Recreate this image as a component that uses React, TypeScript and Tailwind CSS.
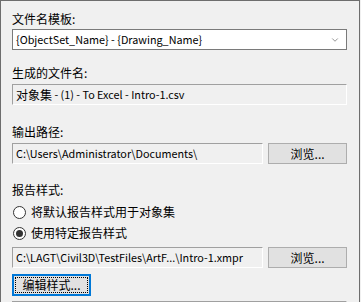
import { ChevronDown } from 'lucide-react';

const font = { fontFamily: '"Noto Sans CJK SC", "Noto Sans", sans-serif' };

function Label({ children, className = '' }: { children: React.ReactNode; className?: string }) {
  return <div className={`h-4 text-[12px] leading-4 text-black ${className}`}>{children}</div>;
}

function Sunken({ children, className = '' }: { children?: React.ReactNode; className?: string }) {
  return (
    <div
      className={`flex h-[21px] items-center overflow-hidden whitespace-nowrap border border-t-[#a0a0a0] border-l-[#a0a0a0] border-b-white border-r-white bg-[#f0f0f0] pl-[3px] text-[10.8px] text-black ${className}`}
    >
      {children}
    </div>
  );
}

function Browse() {
  return (
    <button className="ml-[5px] flex h-[21px] w-[79px] items-center justify-center border border-[#adadad] bg-[#e1e1e1] text-[12px] text-black">
      浏览...
    </button>
  );
}

function Radio({ checked, label, className = '' }: { checked?: boolean; label: string; className?: string }) {
  return (
    <div className={`flex h-5 items-center ${className}`}>
      <span className="ml-[1px] flex h-[13px] w-[13px] items-center justify-center rounded-full border border-[#333333] bg-white">
        {checked && <span className="h-[7px] w-[7px] rounded-full bg-[#333333]" />}
      </span>
      <span className="ml-[5px] text-[12px] text-black">{label}</span>
    </div>
  );
}

export default function App() {
  return (
    <div className="h-[302px] w-[361px] overflow-hidden bg-[#f0f0f0]" style={font}>
      <div className="h-[302px] w-[360px] overflow-hidden border-l border-r border-t border-[#6d6d6d] pl-[11px] pr-[12px] pt-[10px]">
        <Label>文件名模板:</Label>
        <div className="mt-[2px] flex h-[21px] items-center border border-[#7a7a7a] bg-white pl-[3px] pr-[6px] text-[10.8px] text-black">
          <span className="flex-1 whitespace-nowrap">{'{ObjectSet_Name} - {Drawing_Name}'}</span>
          <ChevronDown className="h-[10px] w-[10px] text-[#555555]" strokeWidth={1.5} />
        </div>

        <Label className="mt-[15px]">生成的文件名:</Label>
        <Sunken className="mt-[3px]">
          <span className="text-[12px]">对象集</span>
          <span>&nbsp;- (1) - To Excel - Intro-1.csv</span>
        </Sunken>

        <Label className="mt-[19px]">输出路径:</Label>
        <div className="mt-[3px] flex">
          <Sunken className="w-[252px]">C:\Users\Administrator\Documents\</Sunken>
          <Browse />
        </div>

        <Label className="mt-[18px]">报告样式:</Label>
        <Radio className="mt-[4px]" label="将默认报告样式用于对象集" />
        <Radio className="mt-[1px]" checked label="使用特定报告样式" />
        <div className="mt-[4px] flex">
          <Sunken className="w-[252px]">C:\LAGT\Civil3D\TestFiles\ArtF...\Intro-1.xmpr</Sunken>
          <Browse />
        </div>

        <button className="mt-[6px] flex h-[22px] w-[79px] items-center justify-center border-2 border-[#0078d7] bg-[#e1e1e1] p-[1px] text-[12px] text-black">
          <span className="flex h-full w-full items-center justify-center border border-dotted border-black">编辑样式...</span>
        </button>

        <Sunken className="mt-[5px]" />
      </div>
    </div>
  );
}
